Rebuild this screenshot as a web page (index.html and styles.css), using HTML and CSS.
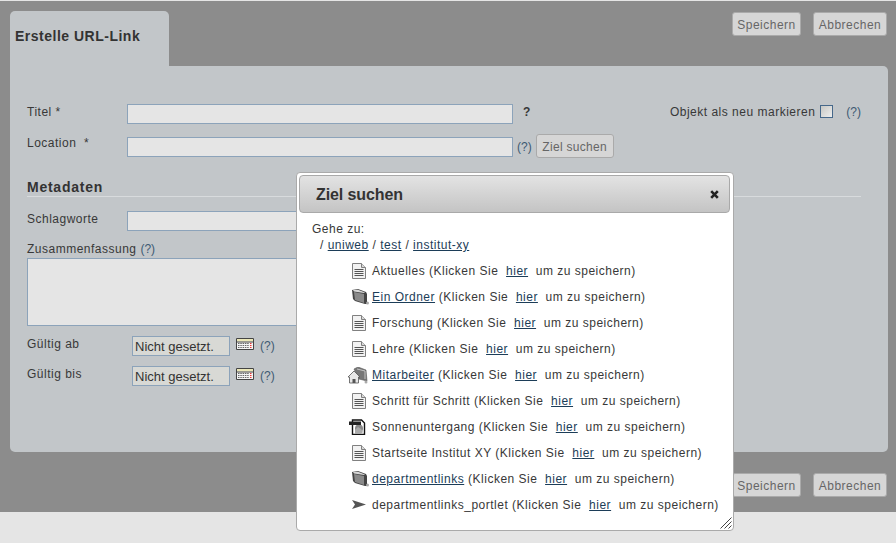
FILE: index.html
```html
<!DOCTYPE html>
<html lang="de">
<head>
<meta charset="utf-8">
<title>Erstelle URL-Link</title>
<link rel="stylesheet" href="styles.css">
</head>
<body>
<svg class="defs" width="0" height="0" aria-hidden="true">
  <symbol id="doc" viewBox="0 0 20 16">
    <path d="M.5.500h9l4 4v11H.500z" fill="#f2f2f2" stroke="#808080"/>
    <path d="M9.500.500v4h4" fill="#d8d8d8" stroke="#808080"/>
    <path d="M2.500 6.500h9M2.500 8.500h9M2.500 10.500h9M2.500 12.500h9" stroke="#555"/>
  </symbol>
  <symbol id="folder" viewBox="0 0 20 16">
    <path d="M0 1l6-1 8 3 1 2v10h-2L3 12 1 10z" fill="#444"/>
    <path d="M1 1l5-.2 7 2.700-1 .5-10-1.500z" fill="#d8d8d8"/>
    <path d="M2 3l10 2v9L3 11z" fill="#8a8a8a"/>
    <circle cx="15.500" cy="14" r="1.500" fill="#a8a8a8"/>
  </symbol>
  <symbol id="home" viewBox="0 0 24 17">
    <path d="M6 2l4-2 8 3 1 11-8-2z" fill="#777" stroke="#555" stroke-width=".6"/>
    <path d="M9 2l8 2v8" fill="none" stroke="#c4c4c4"/>
    <path d="M0 10l6-6 6 6h-1.500v6h-9v-6z" fill="#e8e8e8" stroke="#555" stroke-width=".8"/>
    <path d="M4.500 16v-4h3v4z" fill="#555"/>
    <circle cx="18" cy="15" r="1.500" fill="#aaa"/>
  </symbol>
  <symbol id="image" viewBox="0 0 23 16">
    <path d="M3.500 1h9l3 3v11.500h-12z" fill="#fff" stroke="#111" stroke-width="1.400"/>
    <circle cx="10" cy="9.500" r="4" fill="#888"/>
    <path d="M6 11l3-3 3 2 2 3-2 2H6z" fill="#aaa"/>
    <path d="M0 2.500h12v3.500H0z" fill="#222"/>
  </symbol>
  <symbol id="arrow" viewBox="0 0 20 16">
    <path d="M0 3l14 4.500L0 12l3-4.500z" fill="#555"/>
  </symbol>
  <symbol id="cal" viewBox="0 0 18 12">
    <path d="M.5.500h17v11H.500z" fill="#f3f3f3" stroke="#444"/>
    <path d="M1 1h16v2.500H1z" fill="#ece8b8"/>
    <path d="M1 4h16" stroke="#444"/>
    <path d="M2 5.500h11M2 7.500h11M2 9.500h11" stroke="#666" stroke-dasharray="1.500 .8"/>
    <path d="M14 5.500h2M14 7.500h2M14 9.500h2" stroke="#e33" stroke-dasharray="1 .5"/>
  </symbol>
</svg>

<div class="page">
  <header class="bar">
    <h1 class="tab">Erstelle URL-Link</h1>
    <div class="actions">
      <button class="btn" type="button">Speichern</button>
      <button class="btn" type="button">Abbrechen</button>
    </div>
  </header>

  <main class="panel">
    <div class="row row-title">
      <label class="lbl">Titel *</label>
      <input class="field field-main" type="text">
      <b class="req">?</b>
      <div class="flag">
        <span>Objekt als neu markieren</span>
        <span class="check"></span>
        <a class="help flag-help">(?)</a>
      </div>
    </div>
    <div class="row row-loc">
      <label class="lbl">Location &nbsp;*</label>
      <input class="field field-main" type="text">
      <a class="help loc-help">(?)</a>
      <button class="btn btn-find" type="button">Ziel suchen</button>
    </div>
    <h2 class="meta">Metadaten</h2>
    <div class="row row-kw">
      <label class="lbl">Schlagworte</label>
      <input class="field field-kw" type="text">
    </div>
    <div class="sum-label">Zusammenfassung <a class="help">(?)</a></div>
    <textarea class="field area"></textarea>
    <div class="row row-date">
      <label class="lbl lbl-date">Gültig ab</label>
      <input class="field date" type="text" value="Nicht gesetzt.">
      <svg class="cal"><use href="#cal"/></svg>
      <a class="help">(?)</a>
    </div>
    <div class="row row-date">
      <label class="lbl lbl-date">Gültig bis</label>
      <input class="field date" type="text" value="Nicht gesetzt.">
      <svg class="cal"><use href="#cal"/></svg>
      <a class="help">(?)</a>
    </div>
  </main>

  <footer class="foot">
    <button class="btn" type="button">Speichern</button>
    <button class="btn" type="button">Abbrechen</button>
  </footer>
</div>

<section class="dialog">
  <div class="dlg-head">
    <span class="dlg-title">Ziel suchen</span>
    <svg class="close" viewBox="0 0 9 9"><path d="M1.200 1.200l6.600 6.600M7.800 1.200L1.200 7.800" stroke="#222" stroke-width="2.600"/></svg>
  </div>
  <div class="dlg-body">
    <div class="goto">Gehe zu:</div>
    <div class="crumbs">/ <a>uniweb</a> / <a>test</a> / <a>institut-xy</a></div>
    <ul class="list">
      <li><svg class="ic"><use href="#doc"/></svg><span>Aktuelles (Klicken Sie &nbsp;<a>hier</a> &nbsp;um zu speichern)</span></li>
      <li><svg class="ic"><use href="#folder"/></svg><span><a>Ein Ordner</a> (Klicken Sie &nbsp;<a>hier</a> &nbsp;um zu speichern)</span></li>
      <li><svg class="ic"><use href="#doc"/></svg><span>Forschung (Klicken Sie &nbsp;<a>hier</a> &nbsp;um zu speichern)</span></li>
      <li><svg class="ic"><use href="#doc"/></svg><span>Lehre (Klicken Sie &nbsp;<a>hier</a> &nbsp;um zu speichern)</span></li>
      <li><svg class="ic ic-home"><use href="#home"/></svg><span><a>Mitarbeiter</a> (Klicken Sie &nbsp;<a>hier</a> &nbsp;um zu speichern)</span></li>
      <li><svg class="ic"><use href="#doc"/></svg><span>Schritt für Schritt (Klicken Sie &nbsp;<a>hier</a> &nbsp;um zu speichern)</span></li>
      <li><svg class="ic ic-image"><use href="#image"/></svg><span>Sonnenuntergang (Klicken Sie &nbsp;<a>hier</a> &nbsp;um zu speichern)</span></li>
      <li><svg class="ic"><use href="#doc"/></svg><span>Startseite Institut XY (Klicken Sie &nbsp;<a>hier</a> &nbsp;um zu speichern)</span></li>
      <li><svg class="ic"><use href="#folder"/></svg><span><a>departmentlinks</a> (Klicken Sie &nbsp;<a>hier</a> &nbsp;um zu speichern)</span></li>
      <li><svg class="ic"><use href="#arrow"/></svg><span>departmentlinks_portlet (Klicken Sie &nbsp;<a>hier</a> &nbsp;um zu speichern)</span></li>
    </ul>
  </div>
  <svg class="grip" viewBox="0 0 12 12"><path d="M11.500 .5L.5 11.500M11.500 4.500l-7 7M11.500 8.500l-3 3" stroke="#444" fill="none"/></svg>
</section>
</body>
</html>
```

FILE: styles.css
```css
* { box-sizing: border-box; }
html, body { margin: 0; height: 100%; }
body {
  background: #e5e5e5;
  font-family: "Liberation Sans", Arial, sans-serif;
  font-size: 12px;
  letter-spacing: .5px;
  color: #383838;
  overflow: hidden;
  position: relative;
}
.defs { position: absolute; }
a { color: #1c3d58; text-decoration: underline; }

.page {
  margin-top: 1px;
  height: 511px;
  background: #8c8c8c;
  padding: 10px 8px 0 10px;
}
.bar { display: flex; justify-content: space-between; align-items: flex-start; }
.tab {
  margin: 0;
  width: 159px;
  height: 55px;
  padding: 16px 0 0 5px;
  background: #c2c6c9;
  border-radius: 5px 5px 0 0;
  font-size: 14px;
  line-height: 18px;
  letter-spacing: .5px;
  color: #333;
}
.actions, .foot { display: flex; justify-content: flex-end; gap: 12px; padding-right: 1px; }
.actions { margin-top: 1px; }
.foot { margin-top: 21px; }
.btn {
  height: 24px;
  padding: 1px 0 0;
  border: 1px solid #aaa;
  border-radius: 3px;
  background: #d6d6d6;
  color: #666;
  font: 12px "Liberation Sans", Arial, sans-serif;
  letter-spacing: .5px;
  width: 69px;
}
.btn + .btn { width: 74px; }

.panel {
  height: 386px;
  background: #c2c6c9;
  border-radius: 0 5px 5px 5px;
  padding: 38px 27px 0 17px;
}
.row { display: flex; align-items: flex-start; }
.lbl { width: 100px; flex: none; line-height: 16px; color: #383838; }
.row-loc .lbl { margin-top: -2px; }
.field {
  display: block;
  border: 1px solid #8ca3ba;
  background: #e5e5e5;
  border-radius: 0;
  padding: 0 3px;
  margin: 0;
  outline: none;
  font: 12px "Liberation Sans", Arial, sans-serif;
  color: #333;
}
.field-main { width: 386px; height: 20px; flex: none; }
.req { margin: 0 0 0 10px; line-height: 16px; font-size: 12px; }
.flag { margin-left: auto; display: flex; align-items: flex-start; line-height: 16px; }
.check {
  width: 13px;
  height: 13px;
  margin: 1px 0 0 5px;
  border: 1px solid #46688a;
  background: linear-gradient(135deg, #c8c8c4, #eee);
}
.help { color: #3d5a73; text-decoration: none; letter-spacing: 0; }
.flag-help { margin-left: 13px; }
.row-loc { margin-top: 13px; }
.loc-help { margin: 2px 0 0 4px; line-height: 16px; }
.btn-find { width: 78px; margin: -3px 0 0 4px; letter-spacing: .3px; }
.meta {
  margin: 21px 0 0;
  border-bottom: 1px solid #d8dbdd;
  font-size: 14px;
  line-height: 17px;
  letter-spacing: .75px;
  color: #333;
}
.row-kw { margin-top: 14px; }
.field-kw { width: 300px; height: 20px; }
.sum-label { margin-top: 10px; line-height: 16px; }
.area { width: 400px; height: 68px; margin-top: 1px; resize: none; }
.row-date { margin-top: 10px; }
.lbl-date { width: 105px; }
.date {
  width: 98px;
  height: 20px;
  background: #d8d9d5;
  font-size: 13px;
  letter-spacing: 0;
  padding: 0 2px;
  color: #333;
}
.cal { width: 18px; height: 12px; margin: 2px 0 0 6px; flex: none; }
.row-date .help { margin: 2px 0 0 6px; line-height: 16px; }

.dialog {
  position: absolute;
  left: 296px;
  top: 172px;
  width: 438px;
  height: 359px;
  background: #fff;
  border: 1px solid #aaa;
  border-radius: 4px;
  padding: 2px 3px 0 2px;
}
.dlg-head {
  height: 38px;
  display: flex;
  align-items: center;
  justify-content: space-between;
  padding: 0 10px 0 16px;
  border: 1px solid #a9a9a9;
  border-radius: 4px;
  background: linear-gradient(#e3e3e3, #c4c4c4);
  font-size: 16px;
  font-weight: bold;
  letter-spacing: -.1px;
  color: #333;
}
.dlg-title { padding-top: 1px; }
.close { width: 9px; height: 9px; }
.dlg-body { padding: 8px 0 0 13px; }
.goto { line-height: 16px; }
.crumbs { line-height: 16px; padding-left: 8px; }
.list { list-style: none; margin: 5px 0 0; padding: 0 0 0 40px; }
.list li { display: flex; align-items: center; height: 26px; }
.ic { width: 20px; height: 16px; flex: none; }
.ic-home { width: 24px; height: 17px; margin-left: -4px; }
.ic-image { width: 23px; margin-left: -3px; }
.grip { position: absolute; right: 1px; bottom: 1px; width: 12px; height: 12px; }
```
